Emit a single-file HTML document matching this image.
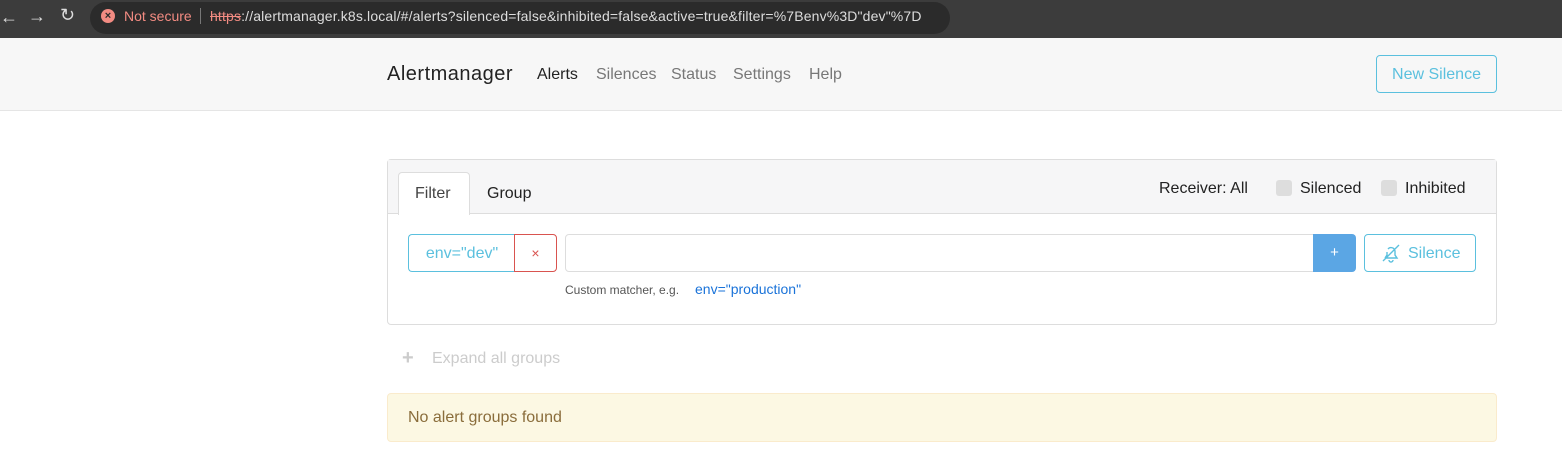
<!DOCTYPE html>
<html><head><style>
*{box-sizing:border-box;margin:0;padding:0}
body{width:1562px;height:462px;overflow:hidden;background:#fff;font-family:"Liberation Sans",sans-serif;position:relative}
.abs{position:absolute}
</style></head><body>
<div class="abs" style="left:0;top:0;width:1562px;height:38px;background:#3c3c3c"></div>
<div class="abs" style="left:90px;top:2px;width:860px;height:32px;background:#2b2b2b;border-radius:16px"></div>
<div class="abs" style="left:0;top:7px;color:#ddd;font-size:18px">&#8592;</div>
<div class="abs" style="left:28px;top:6px;color:#ddd;font-size:18px">&#8594;</div>
<div class="abs" style="left:60px;top:5px;color:#ddd;font-size:18px">&#8635;</div>
<div class="abs" style="left:101px;top:9px;width:14px;height:14px;border-radius:50%;background:#f28b82;color:#2b2b2b;font-size:11px;text-align:center;line-height:14px;font-weight:bold">×</div>
<div class="abs" style="left:124px;top:8px;font-size:14px;color:#f28b82">Not secure</div>
<div class="abs" style="left:200px;top:8px;width:1px;height:16px;background:#777"></div>
<div class="abs" style="left:210px;top:8px;font-size:14px;color:#ddd;white-space:nowrap;letter-spacing:0.15px"><span style="color:#f28b82;text-decoration:line-through">https</span>://alertmanager.k8s.local/#/alerts?silenced=false&amp;inhibited=false&amp;active=true&amp;filter=%7Benv%3D"dev"%7D</div>

<div class="abs" style="left:0;top:38px;width:1562px;height:73px;background:#f7f7f7;border-bottom:1px solid #e5e5e5"></div>
<div class="abs" style="left:387px;top:63px;font-size:20px;color:#222;letter-spacing:0.5px">Alertmanager</div>
<div class="abs" style="left:537px;top:66px;font-size:16px;color:#222">Alerts</div>
<div class="abs" style="left:596px;top:66px;font-size:16px;color:#777">Silences</div>
<div class="abs" style="left:671px;top:66px;font-size:16px;color:#777">Status</div>
<div class="abs" style="left:733px;top:66px;font-size:16px;color:#777">Settings</div>
<div class="abs" style="left:809px;top:66px;font-size:16px;color:#777">Help</div>
<div class="abs" style="left:1376px;top:55px;width:121px;height:38px;border:1px solid #5bc0de;border-radius:4px;color:#5bc0de;font-size:16px;text-align:center;line-height:38px">New Silence</div>

<div class="abs" style="left:387px;top:159px;width:1110px;height:166px;border:1px solid #ddd;border-radius:4px"></div>
<div class="abs" style="left:388px;top:160px;width:1108px;height:54px;background:#f6f6f7;border-bottom:1px solid #ddd"></div>
<div class="abs" style="left:398px;top:172px;width:72px;height:43px;background:#fff;border:1px solid #ddd;border-bottom:none;border-radius:4px 4px 0 0"></div>
<div class="abs" style="left:415px;top:185px;font-size:16px;color:#444">Filter</div>
<div class="abs" style="left:487px;top:185px;font-size:16px;color:#222">Group</div>
<div class="abs" style="left:1159px;top:180px;font-size:16px;color:#222">Receiver: All</div>
<div class="abs" style="left:1276px;top:180px;width:16px;height:16px;background:#ddd;border-radius:3px"></div>
<div class="abs" style="left:1300px;top:180px;font-size:16px;color:#222">Silenced</div>
<div class="abs" style="left:1381px;top:180px;width:16px;height:16px;background:#ddd;border-radius:3px"></div>
<div class="abs" style="left:1405px;top:180px;font-size:16px;color:#222">Inhibited</div>

<div class="abs" style="left:408px;top:234px;width:107px;height:38px;border:1px solid #5bc0de;border-right:none;border-radius:4px 0 0 4px;color:#5bc0de;font-size:16px;text-align:center;line-height:38px">env="dev"</div>
<div class="abs" style="left:514px;top:234px;width:43px;height:38px;border:1px solid #d9534f;border-radius:0 4px 4px 0;color:#d9534f;font-size:14px;text-align:center;line-height:36px">×</div>
<div class="abs" style="left:565px;top:234px;width:750px;height:38px;border:1px solid #ddd;border-radius:4px 0 0 4px"></div>
<div class="abs" style="left:1313px;top:234px;width:43px;height:38px;background:#5ba6e4;border-radius:0 4px 4px 0;color:#fff;font-size:15px;text-align:center;line-height:38px">+</div>
<div class="abs" style="left:1364px;top:234px;width:112px;height:38px;border:1px solid #5bc0de;border-radius:4px;color:#5bc0de;font-size:16px;line-height:38px;padding-left:43px">Silence</div>
<svg class="abs" style="left:1381px;top:243px" width="20" height="20" viewBox="0 0 20 20" fill="none" stroke="#5bc0de" stroke-width="1.4"><path d="M5 15h11l-2-3V8a4 4 0 0 0-7-2M6 9v3l-2 3M8 17a2 2 0 0 0 4 0M2 18L18 2"/></svg>
<div class="abs" style="left:565px;top:283px;font-size:12px;color:#555">Custom matcher, e.g.</div>
<div class="abs" style="left:695px;top:281px;font-size:14px;color:#1a73d9">env="production"</div>

<div class="abs" style="left:402px;top:347px;font-size:20px;color:#ccc;font-weight:bold">+</div>
<div class="abs" style="left:432px;top:350px;font-size:16px;color:#ccc">Expand all groups</div>
<div class="abs" style="left:387px;top:393px;width:1110px;height:49px;background:#fcf8e3;border:1px solid #faebcc;border-radius:4px"></div>
<div class="abs" style="left:408px;top:409px;font-size:16px;color:#8a6d3b">No alert groups found</div>
</body></html>
